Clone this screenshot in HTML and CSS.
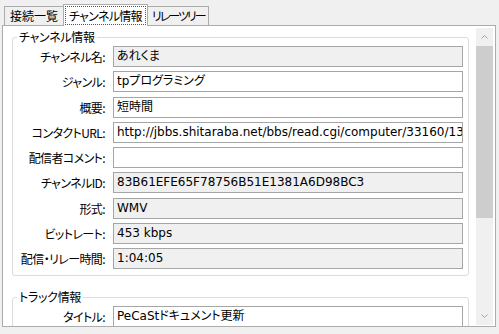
FILE: index.html
```html
<!DOCTYPE html>
<html lang="ja">
<head>
<meta charset="utf-8">
<title>チャンネル情報</title>
<link rel="stylesheet" href="styles.css">
</head>
<body>
<div class="tabs">
  <div class="tab">接続一覧</div>
  <div class="tab active"><span class="focus">チャンネル情報</span></div>
  <div class="tab relay">リレーツリー</div>
</div>
<div class="panel">
  <div class="content">
    <fieldset class="group">
      <legend>チャンネル情報</legend>
      <div class="rows">
        <label>チャンネル名:</label><div class="field ro">あれくま</div>
        <label>ジャンル:</label><div class="field">tpプログラミング</div>
        <label>概要:</label><div class="field">短時間</div>
        <label>コンタクトURL:</label><div class="field">http://jbbs.shitaraba.net/bbs/read.cgi/computer/33160/13</div>
        <label>配信者コメント:</label><div class="field"></div>
        <label>チャンネルID:</label><div class="field ro">83B61EFE65F78756B51E1381A6D98BC3</div>
        <label>形式:</label><div class="field ro">WMV</div>
        <label>ビットレート:</label><div class="field ro">453 kbps</div>
        <label>配信・リレー時間:</label><div class="field ro">1:04:05</div>
      </div>
    </fieldset>
    <fieldset class="group second">
      <legend>トラック情報</legend>
      <div class="rows">
        <label>タイトル:</label><div class="field">PeCaStドキュメント更新</div>
      </div>
    </fieldset>
  </div>
  <div class="scrollbar">
    <div class="arrow"><svg width="7" height="4" viewBox="0 0 7 4"><polyline points="0.5,3.5 3.5,0.5 6.5,3.5" fill="none" stroke="#a3a3a3" stroke-width="1"/></svg></div>
    <div class="thumb"></div>
    <div class="track"></div>
    <div class="arrow"><svg width="7" height="4" viewBox="0 0 7 4"><polyline points="0.5,0.5 3.5,3.5 6.5,0.5" fill="none" stroke="#a3a3a3" stroke-width="1"/></svg></div>
  </div>
</div>
</body>
</html>
```

FILE: styles.css
```css
* { box-sizing: border-box; }
html, body {
  margin: 0;
  padding: 0;
  background: #f0f0f0;
  width: 499px;
  height: 334px;
  overflow: hidden;
  font-family: "DejaVu Sans", "Noto Sans CJK JP", sans-serif;
  font-size: 12px;
  font-feature-settings: "palt";
  color: #000;
}
.tabs {
  display: flex;
  align-items: flex-end;
  height: 25px;
  padding-left: 4px;
}
.tab {
  height: 19px;
  padding: 0 5px;
  border: 1px solid #acacac;
  border-bottom: none;
  background: #f0f0f0;
  line-height: 17px;
  font-family: "Noto Sans CJK JP", sans-serif;
  font-size: 12px;
  white-space: nowrap;
}
.tab + .tab { margin-left: -1px; }
.tab.active {
  height: 22px;
  margin-bottom: -1px;
  padding: 1px 1px 0 1px;
  background: #fff;
  position: relative;
  z-index: 1;
}
.tab.relay {
  padding: 0 3px 0 4px;
  letter-spacing: -2px;
}
.focus {
  display: block;
  height: 19px;
  padding: 0 3px;
  border: 1px dotted #555;
  line-height: 17px;
  letter-spacing: -0.7px;
}
.panel {
  margin-left: 2px;
  width: 494px;
  height: 302px;
  border: 1px solid #acacac;
  background: #fff;
  display: flex;
  padding: 2px 1px 0 1px;
}
.content {
  flex: 1;
  overflow: hidden;
  padding: 1px 7px 0 8px;
}
.group {
  margin: 0;
  padding: 1px 6px 6px 0;
  border: 1px solid #dcdcdc;
  border-radius: 3px;
  min-width: 0;
}
.group.second { margin-top: 13px; }
legend {
  margin-left: 4px;
  padding: 0 2px;
  line-height: 16px;
  font-family: "Noto Sans CJK JP", sans-serif;
  letter-spacing: -0.3px;
}
.rows {
  display: grid;
  grid-template-columns: 92px 350px;
  column-gap: 8px;
  row-gap: 4.25px;
  align-items: center;
}
label {
  text-align: right;
  white-space: nowrap;
  font-family: "Noto Sans CJK JP", sans-serif;
  letter-spacing: -0.6px;
}
.field {
  height: 21px;
  border: 1px solid #a6a6a6;
  background: #fff;
  padding: 0 3px;
  line-height: 19px;
  white-space: nowrap;
  overflow: hidden;
}
.field.ro { background: #f0f0f0; }
.scrollbar {
  width: 17px;
  height: 297px;
  background: #f0f0f0;
  display: flex;
  flex-direction: column;
  margin-right: 1px;
}
.arrow {
  height: 18px;
  display: flex;
  align-items: center;
  justify-content: center;
}
.thumb {
  height: 172px;
  background: #cdcdcd;
}
.track { flex: 1; }
```
